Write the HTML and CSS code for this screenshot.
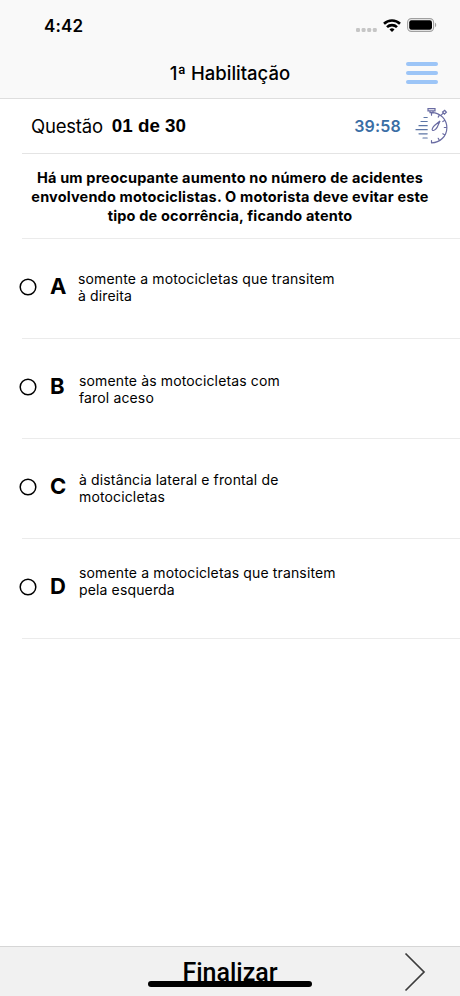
FILE: index.html
```html
<!DOCTYPE html>
<html lang="pt-BR">
<head>
	<meta charset="UTF-8">
	<meta name="viewport" content="width=device-width, initial-scale=1">
	<title>1ª Habilitação</title>
	<link rel="stylesheet" href="styles.css">
</head>
<body>
	<header class="top">
		<div class="status-bar">
			<span class="clock">4:42</span>
			<div class="status-icons">
				<svg class="signal" width="21" height="4" viewBox="0 0 21 4" fill="#c6c6c6">
					<rect x="0" width="4" height="4" rx="1.3"/>
					<rect x="5.6" width="4" height="4" rx="1.3"/>
					<rect x="11.2" width="4" height="4" rx="1.3"/>
					<rect x="16.8" width="4" height="4" rx="1.3"/>
				</svg>
				<svg class="wifi" width="18" height="13" viewBox="0 0 18 13" fill="none" stroke="#000" stroke-width="2.6">
					<path d="M1 4.7a11.5 11.5 0 0 1 16 0"/>
					<path d="M4 8.1a7.2 7.2 0 0 1 10 0"/>
					<path d="M9 12.9L6.5 10.5a3.6 3.6 0 0 1 5 0z" fill="#000" stroke="none"/>
				</svg>
				<svg class="battery" width="30" height="14" viewBox="0 0 30 14">
					<rect x=".6" y=".6" width="26" height="12.8" rx="3.8" fill="none" stroke="#a0a0a0" stroke-width="1.1"/>
					<rect x="2.2" y="2.2" width="22.8" height="9.6" rx="2.2"/>
					<path d="M28 4.8c1.6.6 1.6 3.8 0 4.4z" fill="#a0a0a0"/>
				</svg>
			</div>
		</div>
		<div class="nav-bar">
			<h1>1ª Habilitação</h1>
			<button class="menu" aria-label="Menu"><i></i><i></i><i></i></button>
		</div>
	</header>

	<main>
		<div class="question-info">
			<span class="label">Questão</span>
			<b class="number">01 de 30</b>
			<span class="timer">39:58</span>
			<svg class="stopwatch" width="34" height="38" viewBox="0 0 34 38" fill="none" stroke="#696ba2" stroke-width="1.2" stroke-linecap="round">
				<path d="M17 5.6A15 15 0 0 1 16.5 35.8"/>
				<path d="M13 1.6h7v2.2h-7zM15 3.8v1.8h3V3.8"/>
				<path d="M26.2 8.2l2-2M27.6 5l2.1-1.7 1.7 2-2 1.8z"/>
				<path d="M16.5 6v2.2M24.2 8.4l-1 1.7M29.6 13.5l-1.8 1M31.4 20.5h-2.1M29.6 27.8l-1.8-1M24.2 33l-1-1.7M16.5 35.5v-2"/>
				<path d="M25 14l-5.2 4.2c-2 1.8-3.3 4.4-2.3 5.1 1.2.7 3.4-.9 4.6-2.9z"/>
				<path d="M9 10.5h3.2M6 14.5h6.2M4 18.7h8.2M1 22.7h11.2M4 26.8h8.2M8 31h4.2" stroke="#5c75a5"/>
			</svg>
		</div>

		<p class="question">
			<span class="line">Há um preocupante aumento no número de acidentes</span>
			<span class="line">envolvendo motociclistas. O motorista deve evitar este</span>
			<span class="line">tipo de ocorrência, ficando atento</span>
		</p>

		<ul class="answers">
			<li class="answer answer-a">
				<svg class="radio" viewBox="0 0 18 18"><circle cx="9" cy="9" r="7.8"/></svg>
				<b class="letter">A</b>
				<p>somente a motocicletas que transitem<br>à direita</p>
			</li>
			<li class="answer answer-b">
				<svg class="radio" viewBox="0 0 18 18"><circle cx="9" cy="9" r="7.8"/></svg>
				<b class="letter">B</b>
				<p>somente às motocicletas com<br>farol aceso</p>
			</li>
			<li class="answer answer-c">
				<svg class="radio" viewBox="0 0 18 18"><circle cx="9" cy="9" r="7.8"/></svg>
				<b class="letter">C</b>
				<p>à distância lateral e frontal de<br>motocicletas</p>
			</li>
			<li class="answer answer-d">
				<svg class="radio" viewBox="0 0 18 18"><circle cx="9" cy="9" r="7.8"/></svg>
				<b class="letter">D</b>
				<p>somente a motocicletas que transitem<br>pela esquerda</p>
			</li>
		</ul>
	</main>

	<footer class="bottom">
		<span class="finish">Finalizar</span>
		<svg class="next" width="22" height="40" viewBox="0 0 22 40" fill="none" stroke="#3c3c3c" stroke-width="1.7">
			<path d="M1.5 1.5L20 20 1.5 38.5"/>
		</svg>
		<div class="home-indicator"></div>
	</footer>
</body>
</html>
```
FILE: styles.css
```css
* {
	box-sizing: border-box;
	margin: 0;
	padding: 0;
}
body {
	display: flex;
	flex-direction: column;
	height: 100vh;
	overflow: hidden;
	background: #fff;
	color: #000;
	font-family: Inter, "Liberation Sans", sans-serif;
}

/* status bar + title */
.top {
	height: 99px;
	background: #f9f9f9;
	border-bottom: 1px solid #dedede;
}
.status-bar {
	display: flex;
	justify-content: space-between;
	align-items: center;
	height: 50px;
	padding: 0 23px 0 44px;
}
.clock {
	padding-top: 2px;
	font-size: 17px;
	font-weight: 600;
	line-height: 20px;
	letter-spacing: 0.15px;
}
.status-icons {
	display: flex;
	align-items: center;
}
.signal {
	margin: 9px 6px 0 0;
}
.wifi {
	margin-right: 6px;
}
.nav-bar {
	display: grid;
	grid-template-columns: 1fr auto 1fr;
	align-items: center;
	height: 46px;
	padding: 0 22px;
}
.nav-bar h1 {
	grid-column: 2;
	font-size: 18.5px;
	font-weight: 500;
}
.menu {
	display: flex;
	flex-direction: column;
	justify-self: end;
	gap: 4.6px;
	width: 32px;
	border: none;
	background: none;
}
.menu i {
	height: 4.4px;
	border-radius: 2.2px;
	background: #9cc5f7;
}

/* question */
.question-info {
	display: flex;
	align-items: center;
	height: 55px;
	margin-left: 22px;
	padding: 0 11px 0 9px;
	border-bottom: 1px solid #e4e4e4;
}
.label {
	font-size: 18.5px;
	letter-spacing: -0.2px;
}
.number {
	margin-left: 9px;
	font-family: "Liberation Sans", Arial, sans-serif;
	font-size: 18.8px;
}
.timer {
	margin-left: auto;
	color: #3a6ea5;
	font-size: 16px;
	font-weight: 600;
	letter-spacing: 0.2px;
}
.stopwatch {
	margin-left: 14px;
}
.question {
	height: 85px;
	margin-left: 22px;
	padding: 14px 22px 0 0;
	border-bottom: 1px solid #ebebeb;
	font-size: 14.5px;
	font-weight: 700;
	line-height: 19px;
	letter-spacing: 0.17px;
	text-align: center;
}
.line {
	display: block;
	white-space: nowrap;
}

/* answers */
.answers {
	list-style: none;
}
.answer {
	display: flex;
	align-items: flex-start;
	height: 100px;
	margin-left: 22px;
	border-bottom: 1px solid #ebebeb;
}
.radio {
	width: 18px;
	height: 18px;
	margin: 39px 0 0 -3px;
	fill: none;
	stroke: #000;
	stroke-width: 1.5px;
}
.letter {
	width: 42px;
	margin-top: 34px;
	padding-left: 13px;
	font-size: 22px;
	line-height: 27px;
}
.answer p {
	font-size: 14px;
	line-height: 17px;
	letter-spacing: 0.14px;
	white-space: nowrap;
}
.answer-a p {
	margin-top: 31px;
	margin-left: -1px;
}
.answer-b p {
	margin-top: 33px;
}
.answer-c p {
	margin-top: 32px;
}
.answer-d p {
	margin-top: 25px;
}

/* toolbar */
.bottom {
	position: relative;
	display: grid;
	grid-template-columns: 1fr auto 1fr;
	align-items: center;
	height: 50px;
	margin-top: auto;
	padding-right: 34px;
	padding-left: 34px;
	border-top: 1px solid #d6d6d6;
	background: #f1f1f1;
}
.finish {
	grid-column: 2;
	padding-top: 2px;
	font-family: Roboto, sans-serif;
	font-size: 25px;
	font-weight: 500;
}
.next {
	justify-self: end;
}
.home-indicator {
	position: absolute;
	bottom: 9px;
	left: 148px;
	width: 164px;
	height: 6px;
	border-radius: 3px;
	background: #000;
}
```
